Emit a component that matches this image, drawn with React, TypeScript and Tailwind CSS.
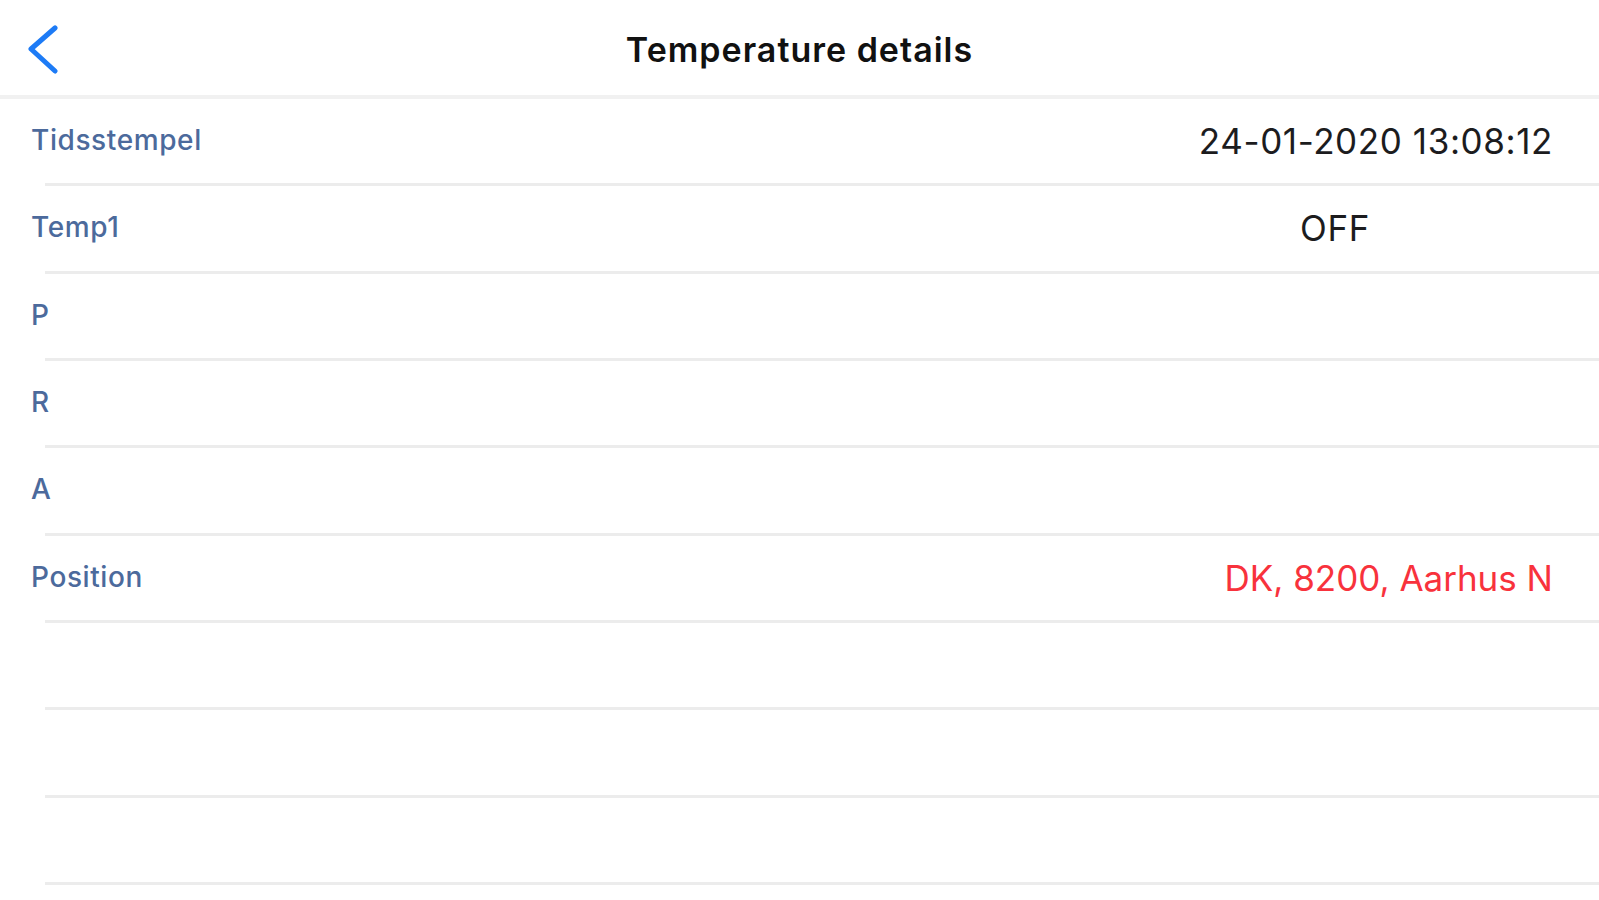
const rows = [
  { label: "Tidsstempel", value: "24-01-2020 13:08:12" },
  { label: "Temp1", value: "OFF", offset: true },
  { label: "P", value: "" },
  { label: "R", value: "" },
  { label: "A", value: "" },
  { label: "Position", value: "DK, 8200, Aarhus N", red: true },
  { label: "", value: "" },
  { label: "", value: "" },
  { label: "", value: "" },
]

export default function App() {
  return (
    <div className="min-h-[900px] w-full bg-white font-['Inter','Liberation_Sans',sans-serif] overflow-hidden">
      <header className="grid h-[99px] grid-cols-[1fr_auto_1fr] items-center border-b-4 border-[#f1f1f1]">
        <div className="flex items-center pl-[24px] pt-[2px]">
          <svg width="40" height="50" viewBox="0 0 40 50" fill="none">
            <polyline
              points="31,4 7,25 31,47"
              stroke="#1d7bf6"
              strokeWidth="5"
              strokeLinecap="round"
              strokeLinejoin="round"
            />
          </svg>
        </div>
        <h1 className="pt-[4px] text-[34px] font-semibold tracking-[1px] text-[#111111]">Temperature details</h1>
        <div />
      </header>
      <div>
        {rows.map((row, i) => (
          <div key={i} className="flex flex-col">
            <div className="flex h-[84.33px] items-center justify-between pl-[31px] pr-[46px]">
              <span className="pb-[2px] text-[28px] font-medium tracking-[0.6px] text-[#4c6a9c]">{row.label}</span>
              <span
                className={`text-[35px] ${row.red ? "tracking-[0px] text-[#f8323c]" : "tracking-[0.6px] text-[#1c1c1e]"} ${row.offset ? "mr-[183px]" : ""}`}
              >
                {row.value}
              </span>
            </div>
            <div className="ml-[45px] h-[3px] bg-[#ececec]" />
          </div>
        ))}
      </div>
    </div>
  )
}
